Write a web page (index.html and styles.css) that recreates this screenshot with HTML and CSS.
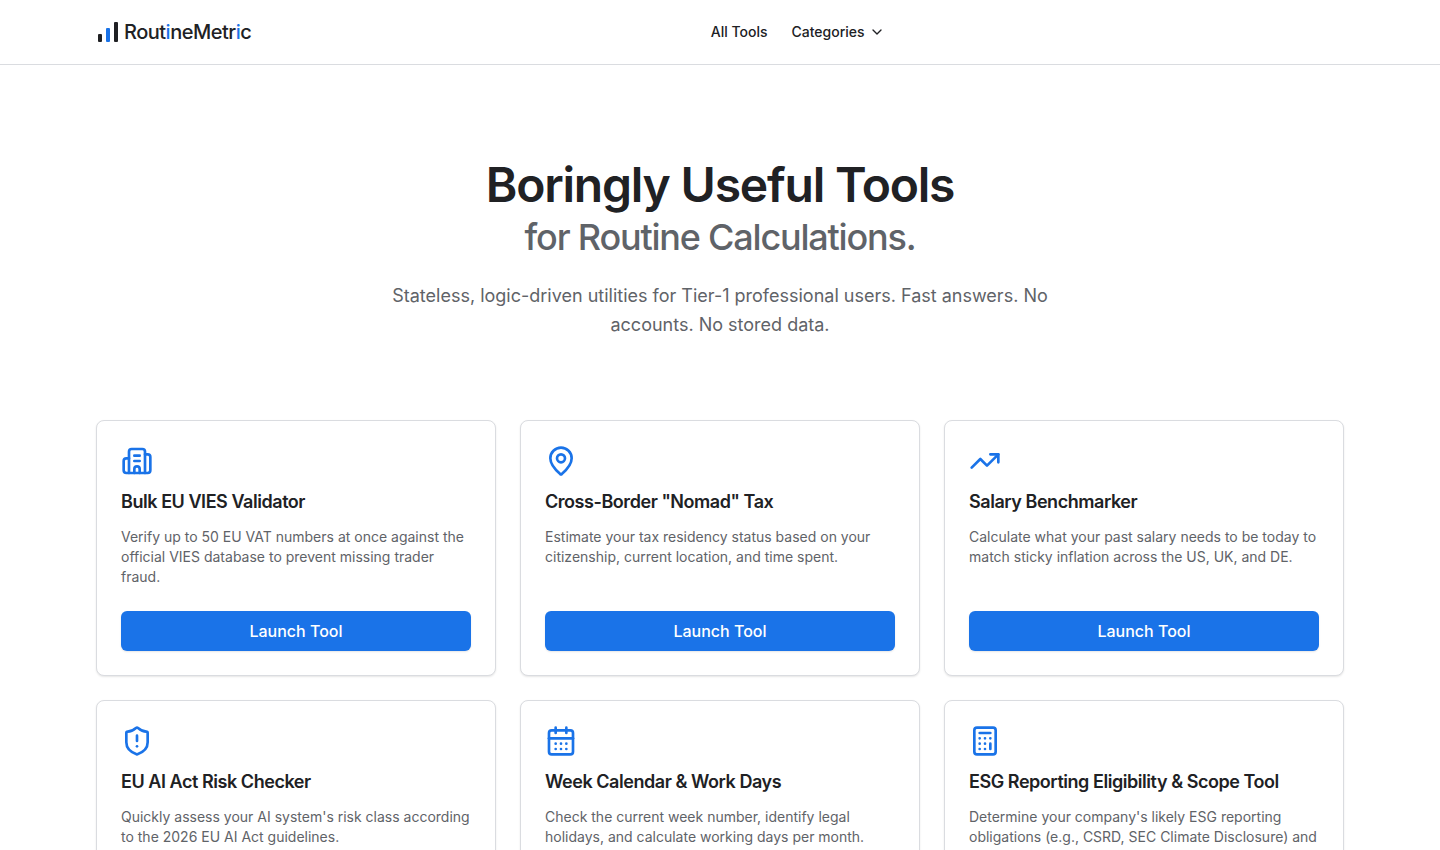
FILE: index.html
```html
<!DOCTYPE html>
<html lang="en">
<head>
    <meta charset="UTF-8">
    <meta name="viewport" content="width=device-width, initial-scale=1.0">
    <title>RoutineMetric</title>
    <link rel="stylesheet" href="styles.css">
</head>
<body>
    <header class="site-header">
        <div class="container header-inner">
            <a href="#" class="logo">
                <svg class="logo-mark" viewBox="0 0 24 24" aria-hidden="true">
                    <rect x="2" y="14" width="4" height="8" rx="1" fill="#202124"/>
                    <rect x="10" y="8" width="4" height="14" rx="1" fill="#1a73e8"/>
                    <rect x="18" y="2" width="4" height="20" rx="1" fill="#202124"/>
                </svg>
                <span class="logo-text">Rout<span class="accent">i</span>neMetr<span class="accent">i</span>c</span>
            </a>
            <nav class="main-nav">
                <a href="#tools" class="nav-link">All Tools</a>
                <button type="button" class="nav-link nav-button">
                    Categories
                    <svg class="icon chevron" viewBox="0 0 24 24" aria-hidden="true"><path d="m6 9 6 6 6-6"/></svg>
                </button>
            </nav>
            <div class="header-actions"></div>
        </div>
    </header>

    <main class="container">
        <section class="hero">
            <h1 class="hero-title">Boringly Useful Tools <span class="hero-subtitle">for Routine Calculations.</span></h1>
            <p class="hero-text">Stateless, logic-driven utilities for Tier-1 professional users. Fast answers. No accounts. No stored data.</p>
        </section>

        <section class="tool-grid" id="tools">
            <article class="card">
                <svg class="icon card-icon" viewBox="0 0 24 24" aria-hidden="true">
                    <path d="M10 12h4"/>
                    <path d="M10 8h4"/>
                    <path d="M14 21v-3a2 2 0 0 0-4 0v3"/>
                    <path d="M6 10H4a2 2 0 0 0-2 2v7a2 2 0 0 0 2 2h16a2 2 0 0 0 2-2V9a2 2 0 0 0-2-2h-2"/>
                    <path d="M6 21V5a2 2 0 0 1 2-2h8a2 2 0 0 1 2 2v16"/>
                </svg>
                <h2 class="card-title">Bulk EU VIES Validator</h2>
                <p class="card-text">Verify up to 50 EU VAT numbers at once against the official VIES database to prevent missing trader fraud.</p>
                <button type="button" class="launch-btn">Launch Tool</button>
            </article>

            <article class="card">
                <svg class="icon card-icon" viewBox="0 0 24 24" aria-hidden="true">
                    <path d="M20 10c0 4.993-5.539 10.193-7.399 11.799a1 1 0 0 1-1.202 0C9.539 20.193 4 14.993 4 10a8 8 0 0 1 16 0"/>
                    <circle cx="12" cy="10" r="3"/>
                </svg>
                <h2 class="card-title">Cross-Border "Nomad" Tax</h2>
                <p class="card-text">Estimate your tax residency status based on your citizenship, current location, and time spent.</p>
                <button type="button" class="launch-btn">Launch Tool</button>
            </article>

            <article class="card">
                <svg class="icon card-icon" viewBox="0 0 24 24" aria-hidden="true">
                    <path d="M16 7h6v6"/>
                    <path d="m22 7-8.500 8.500-5-5L2 17"/>
                </svg>
                <h2 class="card-title">Salary Benchmarker</h2>
                <p class="card-text">Calculate what your past salary needs to be today to match sticky inflation across the US, UK, and DE.</p>
                <button type="button" class="launch-btn">Launch Tool</button>
            </article>

            <article class="card">
                <svg class="icon card-icon" viewBox="0 0 24 24" aria-hidden="true">
                    <path d="M20 13c0 5-3.500 7.500-7.660 8.950a1 1 0 0 1-.670-.010C7.500 20.500 4 18 4 13V6a1 1 0 0 1 1-1c2 0 4.500-1.200 6.240-2.720a1.170 1.170 0 0 1 1.520 0C14.510 3.810 17 5 19 5a1 1 0 0 1 1 1z"/>
                    <path d="M12 8v4"/>
                    <path d="M12 16h.010"/>
                </svg>
                <h2 class="card-title">EU AI Act Risk Checker</h2>
                <p class="card-text">Quickly assess your AI system's risk class according to the 2026 EU AI Act guidelines.</p>
                <button type="button" class="launch-btn">Launch Tool</button>
            </article>

            <article class="card">
                <svg class="icon card-icon" viewBox="0 0 24 24" aria-hidden="true">
                    <path d="M8 2v4"/>
                    <path d="M16 2v4"/>
                    <rect width="18" height="18" x="3" y="4" rx="2"/>
                    <path d="M3 10h18"/>
                    <path d="M8 14h.010M12 14h.010M16 14h.010M8 18h.010M12 18h.010M16 18h.010"/>
                </svg>
                <h2 class="card-title">Week Calendar &amp; Work Days</h2>
                <p class="card-text">Check the current week number, identify legal holidays, and calculate working days per month.</p>
                <button type="button" class="launch-btn">Launch Tool</button>
            </article>

            <article class="card">
                <svg class="icon card-icon" viewBox="0 0 24 24" aria-hidden="true">
                    <rect width="16" height="20" x="4" y="2" rx="2"/>
                    <path d="M8 6h8"/>
                    <path d="M16 14v4"/>
                    <path d="M16 10h.010M12 10h.010M8 10h.010M12 14h.010M8 14h.010M12 18h.010M8 18h.010"/>
                </svg>
                <h2 class="card-title">ESG Reporting Eligibility &amp; Scope Tool</h2>
                <p class="card-text">Determine your company's likely ESG reporting obligations (e.g., CSRD, SEC Climate Disclosure) and</p>
                <button type="button" class="launch-btn">Launch Tool</button>
            </article>
        </section>
    </main>
</body>
</html>
```

FILE: styles.css
```css
* {
    box-sizing: border-box;
}

body {
    font-family: Inter, "Liberation Sans", sans-serif;
    margin: 0;
    background: #fff;
    color: #202124;
    -webkit-font-smoothing: antialiased;
}

.container {
    max-width: 1280px;
    margin: 0 auto;
    padding: 0 16px;
}

.icon {
    fill: none;
    stroke: currentColor;
    stroke-width: 2;
    stroke-linecap: round;
    stroke-linejoin: round;
}

/* Header */
.site-header {
    border-bottom: 1px solid #dadce0;
}

.header-inner {
    display: flex;
    align-items: center;
    justify-content: space-between;
    height: 64px;
}

.logo {
    display: flex;
    align-items: center;
    gap: 4px;
    color: #202124;
    text-decoration: none;
}

.logo-mark {
    width: 24px;
    height: 24px;
}

.logo-text {
    font-size: 20px;
    font-weight: 500;
    line-height: 28px;
    letter-spacing: -0.025em;
}

.accent {
    color: #1a73e8;
}

.main-nav {
    display: flex;
    align-items: center;
    gap: 24px;
}

.nav-link {
    color: #202124;
    font-size: 14px;
    font-weight: 500;
    line-height: 20px;
    text-decoration: none;
}

.nav-button {
    display: flex;
    align-items: center;
    gap: 4px;
    padding: 0;
    border: none;
    background: none;
    font-family: inherit;
    cursor: pointer;
}

.chevron {
    width: 16px;
    height: 16px;
}

/* Hero */
.hero {
    max-width: 672px;
    margin: 0 auto;
    padding: 96px 0 81px;
    text-align: center;
}

.hero-title {
    margin: 0 0 24px;
    font-size: 48px;
    font-weight: 600;
    line-height: 48px;
    letter-spacing: -0.025em;
}

.hero-subtitle {
    display: block;
    margin-top: 8px;
    color: #5f6368;
    font-size: 36px;
    font-weight: 500;
    line-height: 40px;
}

.hero-text {
    margin: 0;
    color: #5f6368;
    font-size: 18px;
    line-height: 29px;
}

/* Tool cards */
.tool-grid {
    display: grid;
    grid-template-columns: repeat(auto-fit, minmax(320px, 1fr));
    gap: 24px;
    padding-bottom: 96px;
}

.card {
    display: flex;
    flex-direction: column;
    padding: 24px;
    border: 1px solid #dadce0;
    border-radius: 8px;
    background: #fff;
    box-shadow: 0 1px 2px rgba(0, 0, 0, 0.1);
}

.card-icon {
    width: 32px;
    height: 32px;
    margin-bottom: 12px;
    color: #1a73e8;
}

.card-title {
    margin: 0 0 12px;
    font-size: 18px;
    font-weight: 600;
    line-height: 26px;
    letter-spacing: -0.025em;
}

.card-text {
    flex: 1;
    margin: 0 0 24px;
    color: #5f6368;
    font-size: 14px;
    line-height: 20px;
}

.launch-btn {
    height: 40px;
    border: none;
    border-radius: 6px;
    background: #1a73e8;
    box-shadow: 0 1px 2px rgba(0, 0, 0, 0.1);
    color: #fff;
    font-family: inherit;
    font-size: 16px;
    font-weight: 500;
    cursor: pointer;
}

.launch-btn:hover {
    background: #1765cc;
}
```
